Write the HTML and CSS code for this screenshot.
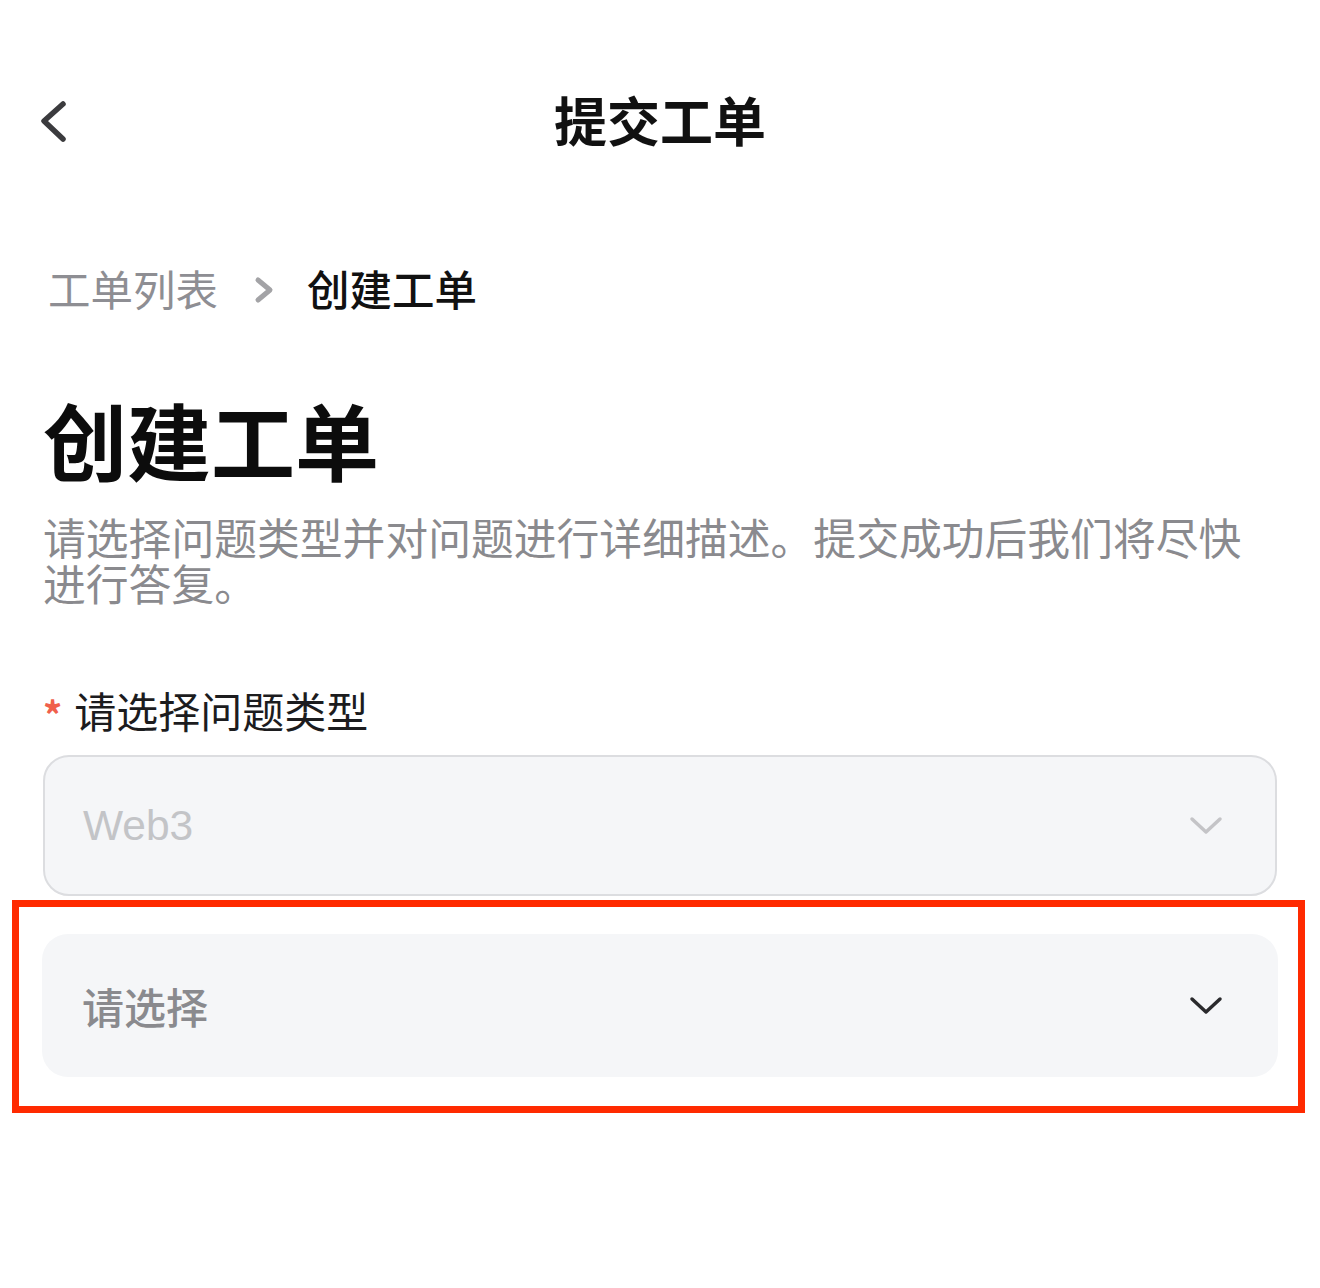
FILE: index.html
```html
<!DOCTYPE html>
<html lang="zh-CN">
<head>
<meta charset="utf-8">
<title>提交工单</title>
<link rel="stylesheet" href="styles.css">
</head>
<body>
<div class="page">
  <header class="topbar">
    <span class="back">
      <svg width="30" height="44" viewBox="0 0 30 44"><path d="M25 4 L6 21 L25 39" fill="none" stroke="#3b3b3e" stroke-width="5.5" stroke-linecap="round" stroke-linejoin="round"/></svg>
    </span>
    <h1 class="topbar-title">提交工单</h1>
  </header>
  <main class="content">
    <nav class="crumbs">
      <span class="crumb-link">工单列表</span>
      <span class="crumb-sep">
        <svg width="22" height="30" viewBox="0 0 22 30"><path d="M5 5 L17 15 L5 25" fill="none" stroke="#a3a3a6" stroke-width="5" stroke-linecap="round" stroke-linejoin="round"/></svg>
      </span>
      <span class="crumb-current">创建工单</span>
    </nav>
    <h2 class="heading">创建工单</h2>
    <p class="desc">请选择问题类型并对问题进行详细描述。提交成功后我们将尽快进行答复。</p>
    <div class="label"><span class="req">*</span>请选择问题类型</div>
    <div class="select select-disabled">
      <span class="select-value">Web3</span>
      <svg class="caret" width="34" height="22" viewBox="0 0 34 22"><path d="M3 4 L17 17 L31 4" fill="none" stroke="#c4c4c7" stroke-width="3.5" stroke-linecap="round" stroke-linejoin="round"/></svg>
    </div>
    <div class="highlight-wrap">
      <div class="select select-active">
        <span class="select-placeholder">请选择</span>
        <svg class="caret" width="34" height="22" viewBox="0 0 34 22"><path d="M3 4 L17 17 L31 4" fill="none" stroke="#2a2a2d" stroke-width="3.5" stroke-linecap="round" stroke-linejoin="round"/></svg>
      </div>
      <div class="highlight"></div>
    </div>
  </main>
</div>
</body>
</html>
```
FILE: styles.css
```css
* { box-sizing: border-box; }
html, body { margin: 0; padding: 0; background: #ffffff; }
body {
  font-family: "Noto Sans CJK SC", "Noto Sans", "Liberation Sans", sans-serif;
  color: #111111;
  width: 1320px;
  height: 1288px;
  overflow: hidden;
}
.page { width: 1320px; }

.topbar {
  position: relative;
  height: 244px;
  display: flex;
  align-items: center;
  justify-content: center;
}
.back {
  position: absolute;
  left: 38px;
  top: 100px;
  width: 30px;
  height: 44px;
  display: flex;
}
.topbar-title {
  margin: 0 0 6px 0;
  font-size: 53px;
  font-weight: 700;
  line-height: 70px;
  color: #111111;
}

.content { padding: 0 43px; }

.crumbs {
  margin-top: 14px;
  height: 60px;
  display: flex;
  align-items: center;
  font-size: 42.5px;
  line-height: 60px;
  padding-left: 5px;
}
.crumb-link { color: #8e8e93; font-weight: 400; }
.crumb-sep { display: flex; margin: 4px 32px 0 35px; }
.crumb-current { color: #111111; font-weight: 500; }

.heading {
  margin: 71px 0 0 0;
  font-size: 84px;
  line-height: 100px;
  font-weight: 700;
  color: #0c0c0c;
}

.desc {
  margin: 24px 0 0 0;
  font-size: 42.8px;
  line-height: 46px;
  color: #8a8a8e;
  font-weight: 400;
}

.label {
  margin-top: 80px;
  height: 50px;
  display: flex;
  align-items: center;
  font-size: 42px;
  line-height: 50px;
  color: #1c1c1e;
}
.req {
  color: #f0604c;
  font-size: 38px;
  font-weight: 700;
  margin-right: 12px;
  line-height: 50px;
  padding-top: 8px;
}

.select {
  display: flex;
  align-items: center;
  justify-content: space-between;
  background: #f5f6f8;
  border-radius: 26px;
  padding: 0 52px 0 38px;
}
.select-disabled {
  margin-top: 20px;
  height: 141px;
  border: 2px solid #dcdde0;
}
.select-value {
  font-family: "Liberation Sans", Arial, sans-serif;
  font-size: 42.5px;
  color: #c3c4c7;
}
.select-placeholder {
  font-size: 42px;
  color: #8a8a8e;
  font-weight: 500;
}
.select-active {
  height: 143px;
  border: none;
  margin-left: -1px;
  margin-right: -1px;
  padding-left: 40px;
  padding-right: 55px;
}

.highlight-wrap {
  position: relative;
  margin-top: 38px;
}
.highlight {
  position: absolute;
  left: -31px;
  right: -28px;
  top: -34px;
  bottom: -36px;
  border: 7px solid #ff2a00;
  pointer-events: none;
}
```
